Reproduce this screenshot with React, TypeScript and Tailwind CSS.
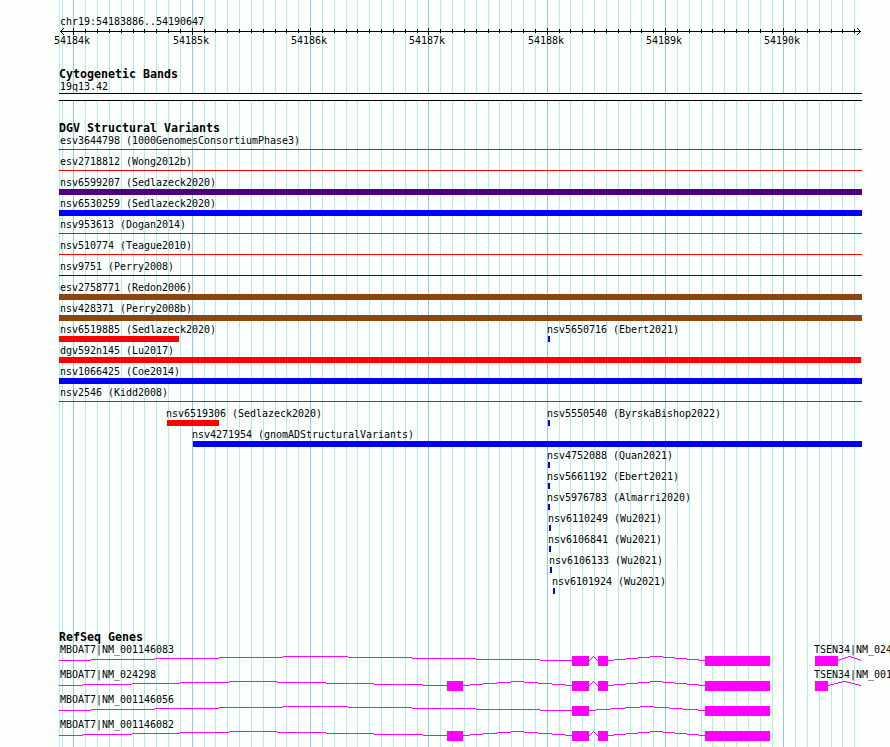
const TRACK_LEFT = 59;
const PAGE_WIDTH = 890;

const majorTicks = [
  { x: 73, label: '54184k' },
  { x: 192, label: '54185k' },
  { x: 310, label: '54186k' },
  { x: 428, label: '54187k' },
  { x: 547, label: '54188k' },
  { x: 665, label: '54189k' },
  { x: 783, label: '54190k' },
];

const minorTicks = [
  62, 85, 97, 109, 121, 133, 144, 156, 168, 180, 204, 215, 227, 239, 251, 263, 275, 286, 298,
  322, 334, 346, 357, 369, 381, 393, 405, 417, 440, 452, 464, 476, 488, 499, 511, 523, 535,
  559, 570, 582, 594, 606, 618, 630, 641, 653, 677, 689, 701, 712, 724, 736, 748, 760, 772,
  795, 807, 819, 831, 842, 854,
];

// Pixels of the two arrow heads at the ends of the ruler
const arrowPixels = [
  [63, 1], [62, 2], [61, 3], [61, 5], [62, 6], [63, 7],
  [857, 1], [858, 2], [859, 3], [859, 5], [858, 6], [857, 7],
];

interface Variant {
  name: string;
  start: number;
  end: number;
  color: string;
  thin?: boolean;
}

const RED = 'bg-[#ff0000]';
const BLUE = 'bg-[#0000ff]';
const BROWN = 'bg-[#8b4513]';
const INDIGO = 'bg-[#4b0082]';

const variantRows: Variant[][] = [
  [{ name: 'esv3644798 (1000GenomesConsortiumPhase3)', start: 59, end: 862, color: RED, thin: true }],
  [{ name: 'esv2718812 (Wong2012b)', start: 59, end: 862, color: RED, thin: true }],
  [{ name: 'nsv6599207 (Sedlazeck2020)', start: 59, end: 862, color: INDIGO }],
  [{ name: 'nsv6530259 (Sedlazeck2020)', start: 59, end: 862, color: BLUE }],
  [{ name: 'nsv953613 (Dogan2014)', start: 59, end: 862, color: RED, thin: true }],
  [{ name: 'nsv510774 (Teague2010)', start: 59, end: 862, color: RED, thin: true }],
  [{ name: 'nsv9751 (Perry2008)', start: 59, end: 862, color: BLUE, thin: true }],
  [{ name: 'esv2758771 (Redon2006)', start: 59, end: 862, color: BROWN }],
  [{ name: 'nsv428371 (Perry2008b)', start: 59, end: 862, color: BROWN }],
  [
    { name: 'nsv6519885 (Sedlazeck2020)', start: 59, end: 179, color: RED },
    { name: 'nsv5650716 (Ebert2021)', start: 548, end: 550, color: BLUE },
  ],
  [{ name: 'dgv592n145 (Lu2017)', start: 59, end: 861, color: RED }],
  [{ name: 'nsv1066425 (Coe2014)', start: 59, end: 862, color: BLUE }],
  [{ name: 'nsv2546 (Kidd2008)', start: 59, end: 862, color: RED, thin: true }],
  [
    { name: 'nsv6519306 (Sedlazeck2020)', start: 167, end: 219, color: RED },
    { name: 'nsv5550540 (ByrskaBishop2022)', start: 548, end: 550, color: BLUE },
  ],
  [{ name: 'nsv4271954 (gnomADStructuralVariants)', start: 193, end: 862, color: BLUE }],
  [{ name: 'nsv4752088 (Quan2021)', start: 548, end: 550, color: BLUE }],
  [{ name: 'nsv5661192 (Ebert2021)', start: 548, end: 550, color: BLUE }],
  [{ name: 'nsv5976783 (Almarri2020)', start: 548, end: 550, color: BLUE }],
  [{ name: 'nsv6110249 (Wu2021)', start: 549, end: 551, color: BLUE }],
  [{ name: 'nsv6106841 (Wu2021)', start: 549, end: 551, color: BLUE }],
  [{ name: 'nsv6106133 (Wu2021)', start: 550, end: 552, color: BLUE }],
  [{ name: 'nsv6101924 (Wu2021)', start: 553, end: 555, color: BLUE }],
];

interface Gene {
  name: string;
  labelX: number;
  exons: [number, number][];
  introns: [number, number][];
}

const geneRows: Gene[][] = [
  [
    {
      name: 'MBOAT7|NM_001146083',
      labelX: 60,
      exons: [[572, 589], [598, 608], [705, 770]],
      introns: [[59, 572], [589, 598], [608, 705]],
    },
    { name: 'TSEN34|NM_024', labelX: 814, exons: [[815, 838]], introns: [[838, 861]] },
  ],
  [
    {
      name: 'MBOAT7|NM_024298',
      labelX: 60,
      exons: [[447, 463], [572, 589], [598, 608], [705, 770]],
      introns: [[59, 447], [463, 572], [589, 598], [608, 705]],
    },
    { name: 'TSEN34|NM_001', labelX: 814, exons: [[815, 828]], introns: [[828, 861]] },
  ],
  [
    {
      name: 'MBOAT7|NM_001146056',
      labelX: 60,
      exons: [[572, 589], [705, 770]],
      introns: [[59, 572], [589, 705]],
    },
  ],
  [
    {
      name: 'MBOAT7|NM_001146082',
      labelX: 60,
      exons: [[447, 463], [572, 589], [598, 608], [705, 770]],
      introns: [[59, 447], [463, 572], [589, 598], [608, 705]],
    },
  ],
];

// An intron rises four pixels to its midpoint and falls back, in whole-pixel steps
function intronPath(start: number, end: number) {
  const step = (end - start) / 16;
  const levels = [0, 1, 2, 3, 4, 3, 2, 1, 0];
  let x = start;
  return levels
    .map((level, i) => {
      const next = i === 8 ? end : Math.round(start + step * (2 * i + 1));
      const run = `M${x} ${5.5 - level}H${next}`;
      x = next;
      return run;
    })
    .join('');
}

function GridLines() {
  return (
    <svg className="absolute inset-0" width={PAGE_WIDTH} height={747} shapeRendering="crispEdges">
      {[TRACK_LEFT, ...minorTicks].map((x) => (
        <rect key={x} x={x} y={0} width={1} height={747} fill="#afeeee" />
      ))}
      {majorTicks.map(({ x }) => (
        <rect key={x} x={x} y={0} width={1} height={747} fill="#87ceeb" />
      ))}
    </svg>
  );
}

function Ruler() {
  return (
    <svg className="block" width={PAGE_WIDTH} height={20} shapeRendering="crispEdges">
      <rect x={60} y={4} width={801} height={1} />
      {arrowPixels.map(([x, y]) => (
        <rect key={`${x}-${y}`} x={x} y={y} width={1} height={1} />
      ))}
      {minorTicks.slice(1).map((x) => (
        <rect key={x} x={x} y={2} width={1} height={4} />
      ))}
      {majorTicks.map(({ x, label }) => (
        <g key={x}>
          <rect x={x} y={1} width={1} height={7} />
          <text x={x - 19} y={17}>
            {label}
          </text>
        </g>
      ))}
    </svg>
  );
}

function TrackTitle({ children }: { children: string }) {
  return (
    <h2 className="pl-[59px] h-3 text-[11.63px] leading-3 font-bold tracking-normal">
      {children}
    </h2>
  );
}

function VariantGlyph({ variant }: { variant: Variant }) {
  const { name, start, end, color, thin } = variant;
  const labelX = start === TRACK_LEFT ? 60 : start - 1;
  return (
    <div className="[grid-area:1/1]">
      <div className="h-3" style={{ paddingLeft: labelX }}>
        {name}
      </div>
      <div
        className={`${color} ${thin ? 'mt-[3px] h-px' : 'mt-px h-1.5'}`}
        style={{ marginLeft: start, width: end - start }}
      />
    </div>
  );
}

function GeneGlyph({ gene }: { gene: Gene }) {
  return (
    <div className="[grid-area:1/1] min-w-0">
      <div className="h-3" style={{ paddingLeft: gene.labelX }}>
        {gene.name}
      </div>
      <svg className="block" width={PAGE_WIDTH} height={13} shapeRendering="crispEdges">
        {gene.introns.map(([start, end]) => (
          <path key={start} d={intronPath(start, end)} stroke="#ff00ff" fill="none" />
        ))}
        {gene.exons.map(([start, end]) => (
          <rect key={start} x={start} y={1} width={end - start} height={10} fill="#ff00ff" />
        ))}
      </svg>
    </div>
  );
}

export default function App() {
  return (
    <main className="relative w-[890px] h-[747px] overflow-hidden bg-[#fdfffc] text-black font-['DejaVu_Sans_Mono',monospace] text-[10px] leading-[14px] tracking-[-0.02px] whitespace-pre">
      <GridLines />
      <div className="relative flex flex-col pt-[15px]">
        <header>
          <div className="h-3 pl-[60px]">chr19:54183886..54190647</div>
          <Ruler />
        </header>

        {/* Cytogenetic bands */}
        <section className="pt-[21px]">
          <TrackTitle>Cytogenetic Bands</TrackTitle>
          <div className="h-[13px] pl-[60px]">19q13.42</div>
          <div className="ml-[59px] w-[803px] h-2 border-y border-black bg-[#fdfffc]" />
        </section>

        {/* Structural variants */}
        <section className="pt-[21px]">
          <TrackTitle>DGV Structural Variants</TrackTitle>
          {variantRows.map((row) => (
            <div key={row[0].name} className="grid h-[21px]">
              {row.map((variant) => (
                <VariantGlyph key={variant.name} variant={variant} />
              ))}
            </div>
          ))}
        </section>

        {/* Genes */}
        <section className="pt-[35px]">
          <TrackTitle>RefSeq Genes</TrackTitle>
          {geneRows.map((row) => (
            <div key={row[0].name} className="grid grid-cols-[890px] h-[25px]">
              {row.map((gene) => (
                <GeneGlyph key={gene.name} gene={gene} />
              ))}
            </div>
          ))}
        </section>
      </div>
    </main>
  );
}
